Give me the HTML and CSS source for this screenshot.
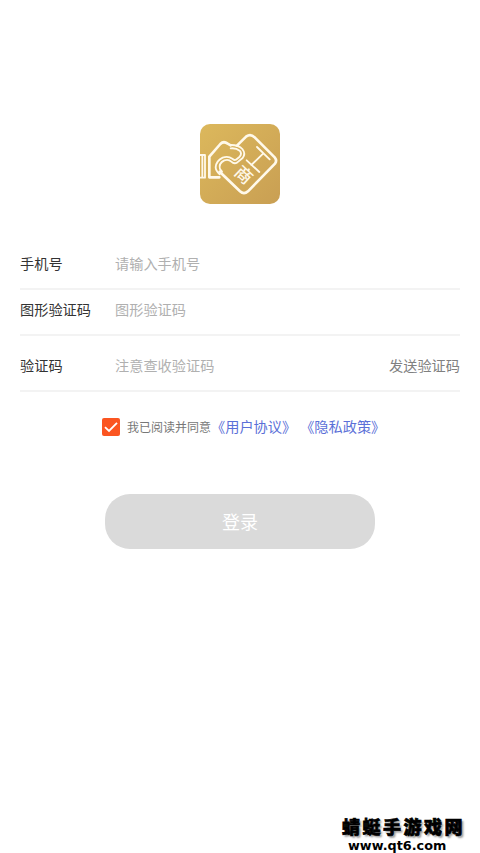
FILE: index.html
```
<!DOCTYPE html>
<html lang="zh-CN">
<head>
<meta charset="utf-8">
<title>登录</title>
<link rel="stylesheet" href="styles.css">
</head>
<body>
<main class="page">
  <svg class="logo" viewBox="30 30 240 240" aria-hidden="true">
    <defs>
      <linearGradient id="gold" x1="0" y1="0" x2="1" y2="1">
        <stop offset="0" stop-color="#dcb85c"/>
        <stop offset="1" stop-color="#c99f53"/>
      </linearGradient>
    </defs>
    <rect x="30" y="30" width="240" height="240" rx="30" fill="url(#gold)"/>
    <g fill="none" stroke="#fff9ea" stroke-width="5.5" stroke-linejoin="round" stroke-linecap="round">
      <path d="M30 123H45V191H30M37 123V191"/>
      <path stroke-width="8" d="M88 190H58V128L91 90Q101 80 113 89L122 94"/>
      <path d="M120 93Q145 92 157 105Q168 119 158 132L141 146Q132 151 124 143Q116 135 103 139Q85 148 90 165L96 173"/>
      <path d="M122 103Q138 101 149 110Q157 119 149 128L138 137Q132 140 127 134Q114 125 98 131Q78 141 77 160Q77 170 89 181"/>
      <path stroke-width="8" d="M89 173L150 232Q162 243 174 232L255 149Q262 140 254 130L194 70Q182 58 169 67L141 95"/>
      <path d="M201 99L239 136M220 118L184 153M170 139L208 174"/>
    </g>
    <text class="logo-char" x="161" y="183" font-size="52" transform="rotate(43 161 183)" text-anchor="middle" dy="18">商</text>
  </svg>
  <form class="form">
    <label class="row row-phone"><span class="label">手机号</span><input class="field" placeholder="请输入手机号"></label>
    <label class="row row-image"><span class="label">图形验证码</span><input class="field" placeholder="图形验证码"></label>
    <div class="row row-code"><span class="label">验证码</span><input class="field" placeholder="注意查收验证码"><span class="send">发送验证码</span></div>
    <div class="consent">
      <svg class="check" viewBox="0 0 18 18"><rect width="18" height="18" rx="2" fill="#fb5521"/><path d="M3 9.2L7 13L15 4.8" fill="none" stroke="#fff" stroke-width="1.8"/></svg>
      <span class="agree">我已阅读并同意</span>
      <a class="link">《用户协议》</a>
      <a class="link link-privacy">《隐私政策》</a>
    </div>
    <button class="submit" type="button">登录</button>
  </form>
  <footer class="mark">
    <div class="mark-name">蜻蜓手游戏网</div>
    <div class="mark-url">www.qt6.com</div>
  </footer>
</main>
</body>
</html>
```
FILE: styles.css
```
* { box-sizing: border-box; }
body { margin: 0; background: #fff; font-family: "Noto Sans CJK SC", sans-serif; }
.page { height: 853px; padding: 124px 20px 0; display: flex; flex-direction: column; overflow: hidden; }
.logo { width: 80px; height: 80px; align-self: center; flex: none; }
.logo-char { fill: #fff9ea; font-weight: 500; }
.form { margin-top: 35px; display: flex; flex-direction: column; }
.row { display: flex; align-items: center; border-bottom: 2px solid #f3f3f3; font-size: 14.2px; line-height: 20px; }
.row-phone { height: 51px; padding-bottom: 2px; }
.row-image { height: 46px; padding-bottom: 6px; }
.row-code { height: 56px; padding-top: 4px; }
.label { width: 95px; color: #333; }
.field { flex: 1; min-width: 0; height: 20px; padding: 0; border: 0; outline: 0; background: none; font: inherit; }
.field::placeholder { color: #b0b0b0; opacity: 1; }
.send { color: #808080; }
.consent { margin: 25px 0 0 82px; height: 20px; display: flex; align-items: center; white-space: nowrap; }
.check { width: 18px; height: 18px; margin-right: 7px; flex: none; }
.agree { font-size: 12px; line-height: 18px; color: #777; }
.link { margin-bottom: 2px; font-size: 14.2px; line-height: 20px; color: #5b70d8; }
.link-privacy { margin-left: 4px; }
.submit { align-self: center; width: 270px; height: 55px; margin-top: 57px; padding: 0 0 2px; border: 0; border-radius: 25px; background: #dadada; color: #fff; font: 18px "Noto Sans CJK SC", sans-serif; }
.mark { margin: auto -16px 0 auto; width: 134px; height: 37px; color: #000; }
.mark-name { font-size: 18px; font-weight: 900; line-height: 21px; letter-spacing: 2.5px; white-space: nowrap; -webkit-text-stroke: 0.7px #000; text-shadow: 2px 2px 2px #999; }
.mark-url { margin-top: 2px; padding-left: 6px; font: 900 12.8px/14px "DejaVu Sans", sans-serif; }
```
